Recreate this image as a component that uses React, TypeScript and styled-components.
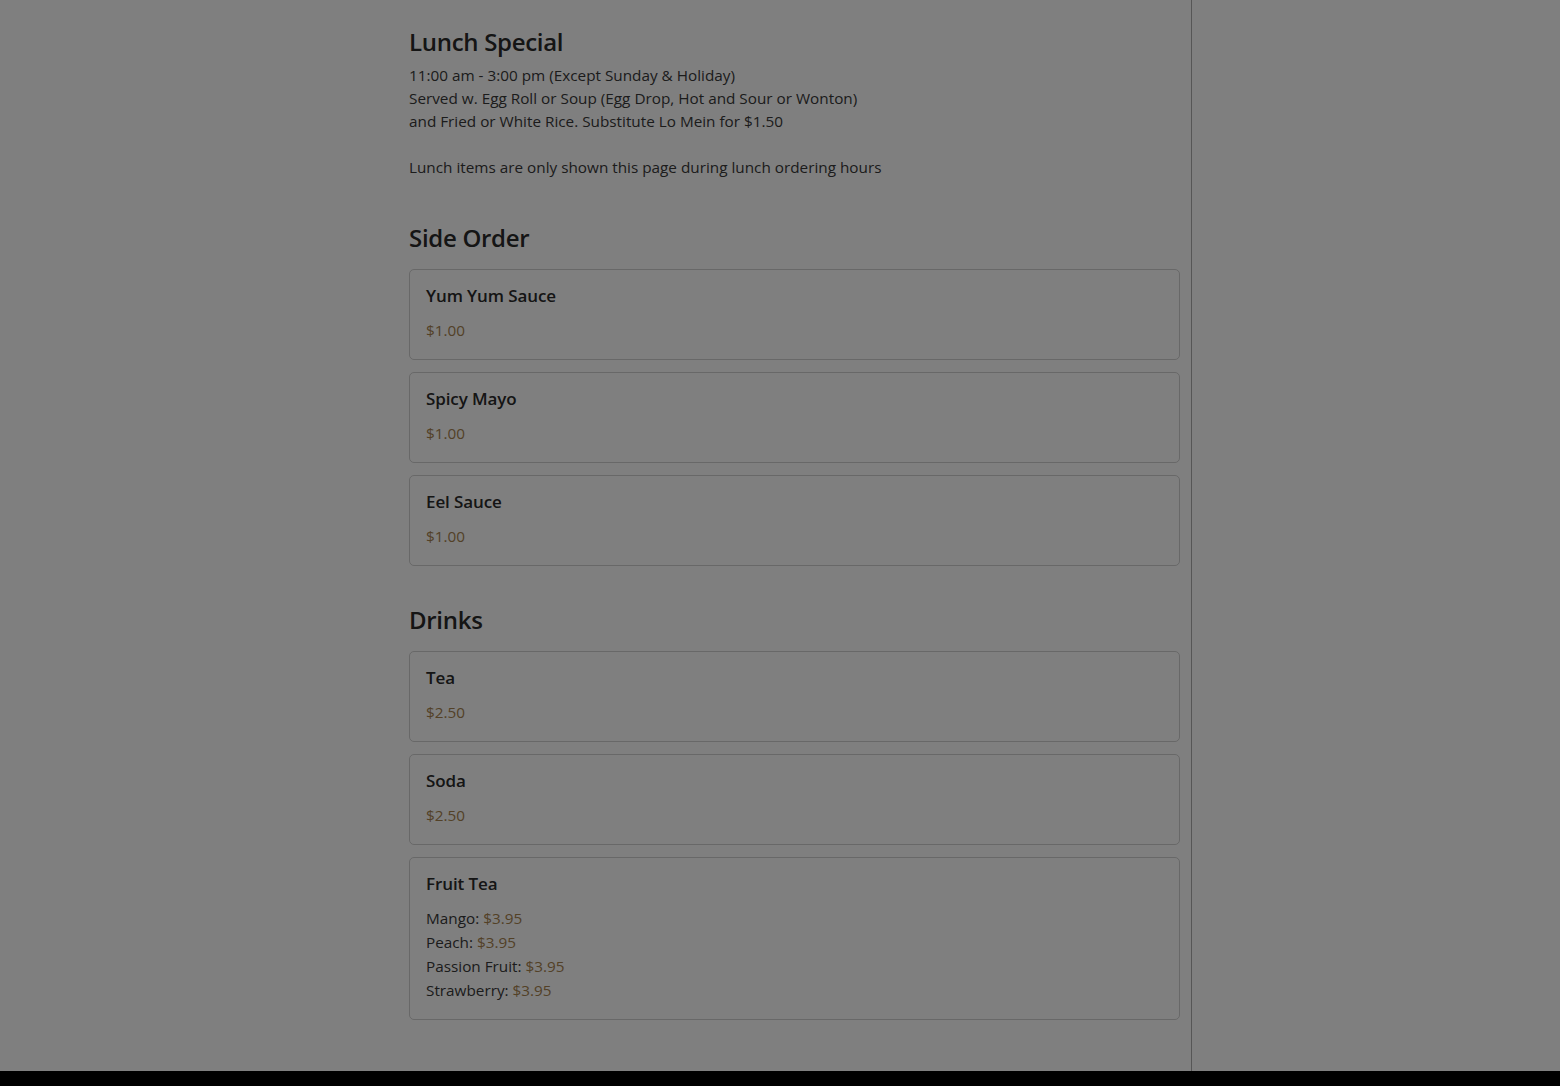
import styled, { createGlobalStyle } from "styled-components";

// ==================== 数据 ====================

interface MenuItem {
  name: string;
  price?: string;
  options?: { label: string; price: string }[];
}

const sideOrders: MenuItem[] = [
  { name: "Yum Yum Sauce", price: "$1.00" },
  { name: "Spicy Mayo", price: "$1.00" },
  { name: "Eel Sauce", price: "$1.00" },
];

const drinks: MenuItem[] = [
  { name: "Tea", price: "$2.50" },
  { name: "Soda", price: "$2.50" },
  {
    name: "Fruit Tea",
    options: [
      { label: "Mango", price: "$3.95" },
      { label: "Peach", price: "$3.95" },
      { label: "Passion Fruit", price: "$3.95" },
      { label: "Strawberry", price: "$3.95" },
    ],
  },
];

// ==================== 样式组件 ====================

const GlobalStyle = createGlobalStyle`
  html, body {
    margin: 0;
    padding: 0;
    background: #ffffff;
  }
  body {
    font-family: "Open Sans", "Noto Sans", Arial, sans-serif;
    color: #333;
  }
`;

const Page = styled.div`
  display: grid;
  grid-template-columns: 409px 782px 1fr;
  min-height: 1071px;
  background: #ffffff;
`;

const Gutter = styled.div``;

const Main = styled.main`
  padding: 26px 11px 40px 0;
`;

const Sidebar = styled.aside`
  border-left: 1px solid #acacac;
`;

const Section = styled.section<{ $gap?: number }>`
  margin-top: ${(p) => p.$gap ?? 0}px;
`;

const SectionTitle = styled.h2`
  margin: 0;
  font-size: 24px;
  line-height: 32px;
  font-weight: 650;
  color: #2a2a2a;
  letter-spacing: -0.3px;
`;

const Notice = styled.p`
  margin: 6px 0 0;
  font-size: 15.3px;
  line-height: 23px;
  color: #383838;
`;

const CardList = styled.div`
  display: flex;
  flex-direction: column;
  gap: 12px;
  margin-top: 15px;
`;

const Card = styled.div`
  border: 1px solid #d0d0d0;
  border-radius: 5px;
  padding: 15px 16px 17px;
  background: #ffffff;
`;

const ItemName = styled.div`
  font-size: 17px;
  line-height: 22px;
  font-weight: 650;
  color: #2a2a2a;
  letter-spacing: -0.1px;
`;

const PriceList = styled.div`
  margin-top: 11px;
  font-size: 15.3px;
  line-height: 24px;
  color: #383838;
`;

const Price = styled.span`
  color: #a6824e;
`;

const Footer = styled.footer`
  height: 15px;
  background: #000;
`;

const Backdrop = styled.div`
  position: fixed;
  inset: 0;
  background: rgba(0, 0, 0, 0.5);
`;

// ==================== 主组件 ====================

function ItemCard({ item }: { item: MenuItem }) {
  return (
    <Card>
      <ItemName>{item.name}</ItemName>
      <PriceList>
        {item.price && <Price>{item.price}</Price>}
        {item.options?.map((o) => (
          <div key={o.label}>
            {o.label}: <Price>{o.price}</Price>
          </div>
        ))}
      </PriceList>
    </Card>
  );
}

export default function App() {
  return (
    <>
      <GlobalStyle />
      <Page>
        <Gutter />
        <Main>
          <Section>
            <SectionTitle>Lunch Special</SectionTitle>
            <Notice>
              11:00 am - 3:00 pm (Except Sunday &amp; Holiday)
              <br />
              Served w. Egg Roll or Soup (Egg Drop, Hot and Sour or Wonton)
              <br />
              and Fried or White Rice. Substitute Lo Mein for $1.50
              <br />
              <br />
              Lunch items are only shown this page during lunch ordering hours
            </Notice>
          </Section>

          <Section $gap={43}>
            <SectionTitle>Side Order</SectionTitle>
            <CardList>
              {sideOrders.map((item) => (
                <ItemCard key={item.name} item={item} />
              ))}
            </CardList>
          </Section>

          <Section $gap={38}>
            <SectionTitle>Drinks</SectionTitle>
            <CardList>
              {drinks.map((item) => (
                <ItemCard key={item.name} item={item} />
              ))}
            </CardList>
          </Section>
        </Main>
        <Sidebar />
      </Page>
      <Footer />
      <Backdrop />
    </>
  );
}
